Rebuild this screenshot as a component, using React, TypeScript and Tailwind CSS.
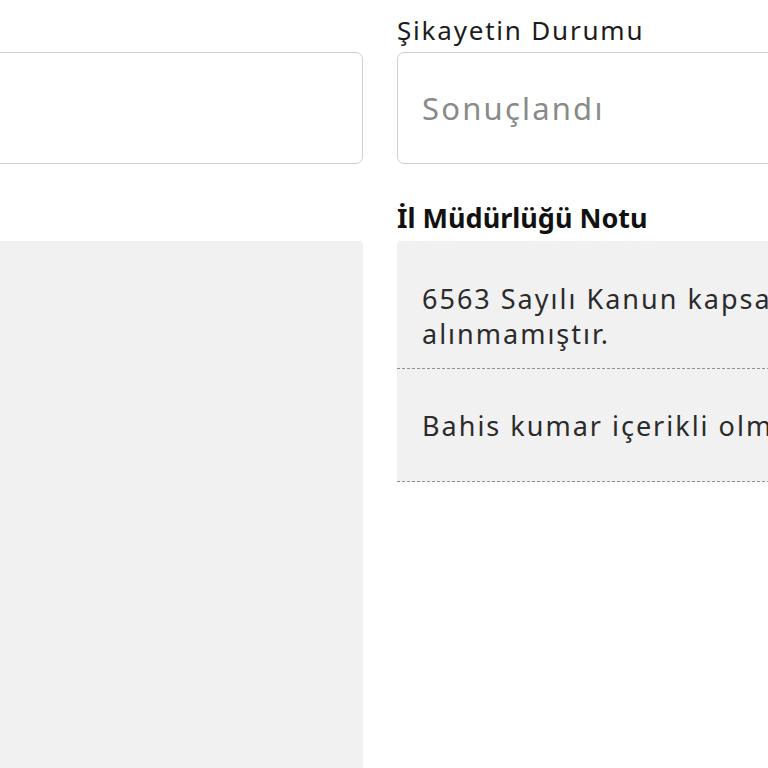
import React from 'react';

const notes = [
  {
    id: 1,
    lines: ['6563 Sayılı Kanun kapsamında değerlendirilecek bir husus tespit edilmediğinden işleme', 'alınmamıştır.'],
    className: 'pt-[40px] pb-[17px]',
  },
  {
    id: 2,
    lines: ['Bahis kumar içerikli olmadığından şikayet sonuçlandırılmıştır.'],
    className: 'pt-[39px] pb-[38px]',
  },
];

export default function App() {
  return (
    <div
      className="h-[768px] w-[768px] overflow-hidden bg-white"
      style={{ fontFamily: '"Noto Sans", "Open Sans", sans-serif' }}
    >
      <div className="ml-[-300px] grid w-[1360px] grid-cols-[663px_663px] gap-x-[34px] pt-[12px]">
        {/* Row 1: complaint fields */}
        <div>
          <div className="mb-[4px] h-[36px]"></div>
          <div className="h-[112px] rounded-[7px] border-[1.5px] border-[#cfcfcf] bg-white"></div>
        </div>
        <div>
          <label className="mb-[4px] block text-[26px] leading-[36px] tracking-[1.8px] text-[#1c1c1c]">
            Şikayetin Durumu
          </label>
          <div className="flex h-[112px] items-center rounded-[7px] border-[1.5px] border-[#cfcfcf] bg-white px-[24px]">
            <span className="text-[31px] tracking-[2.2px] text-[#8a8a8a]">Sonuçlandı</span>
          </div>
        </div>

        {/* Row 2: notes */}
        <div className="mt-[36px]">
          <div className="mb-[5px] h-[36px]"></div>
          <div className="h-[600px] rounded-t-[4px] bg-[#f1f1f1]"></div>
        </div>
        <div className="mt-[36px]">
          <h3 className="mb-[5px] text-[27px] font-bold leading-[36px] text-[#111]">
            İl Müdürlüğü Notu
          </h3>
          <div className="rounded-t-[4px] bg-[#f1f1f1]">
            {notes.map((note) => (
              <div
                key={note.id}
                className={`border-b border-dashed border-[#8f8f8f] px-[25px] text-[27px] leading-[35px] tracking-[2px] text-[#2b2b2b] ${note.className}`}
              >
                {note.lines.map((line, i) => (
                  <p key={i} className="whitespace-nowrap">
                    {line}
                  </p>
                ))}
              </div>
            ))}
          </div>
        </div>
      </div>
    </div>
  );
}
